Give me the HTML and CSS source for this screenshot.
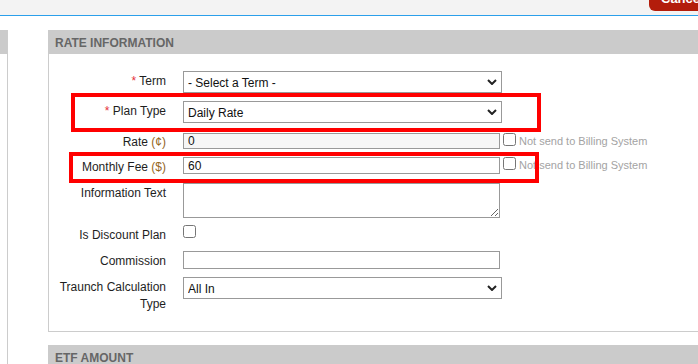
FILE: index.html
```html
<!DOCTYPE html>
<html>
	<head>
		<meta charset="utf-8">
		<title>Rate Plan</title>
		<link rel="stylesheet" href="styles.css">
	</head>
	<body>
		<div class="topbar">
			<button class="btn-cancel" type="button">Cancel</button>
		</div>
		<div class="page">
			<aside class="side">
				<div class="side-head"></div>
			</aside>
			<main class="content">
				<section class="panel">
					<h3 class="panel-head">RATE INFORMATION</h3>
					<div class="panel-body">
						<div class="row row-sel">
							<label class="lbl"><span class="req">*</span> Term</label>
							<div class="ctl">
								<div class="sel">
									<select><option>- Select a Term -</option></select>
									<svg class="chev" width="10" height="6" viewBox="0 0 10 6"><path d="M1 1 L5 5 L9 1" fill="none" stroke="#222" stroke-width="2"/></svg>
								</div>
							</div>
						</div>
						<div class="row row-sel row-mb10">
							<label class="lbl"><span class="req">*</span> Plan Type</label>
							<div class="ctl">
								<div class="sel">
									<select><option>Daily Rate</option></select>
									<svg class="chev" width="10" height="6" viewBox="0 0 10 6"><path d="M1 1 L5 5 L9 1" fill="none" stroke="#222" stroke-width="2"/></svg>
								</div>
							</div>
						</div>
						<div class="row row-mb7">
							<label class="lbl lbl-up">Rate <span class="unit">(¢)</span></label>
							<div class="ctl">
								<input class="txt txt-ro" type="text" value="0" readonly>
								<input class="chk" type="checkbox">
								<span class="note">Not send to Billing System</span>
							</div>
						</div>
						<div class="row row-mb9">
							<label class="lbl">Monthly Fee <span class="unit">($)</span></label>
							<div class="ctl">
								<input class="txt" type="text" value="60">
								<input class="chk" type="checkbox">
								<span class="note">Not send to Billing System</span>
							</div>
						</div>
						<div class="row row-mb7">
							<label class="lbl">Information Text</label>
							<div class="ctl">
								<textarea class="area"></textarea>
							</div>
						</div>
						<div class="row row-mb9">
							<label class="lbl">Is Discount Plan</label>
							<div class="ctl">
								<input class="chk chk-plain" type="checkbox">
							</div>
						</div>
						<div class="row">
							<label class="lbl">Commission</label>
							<div class="ctl">
								<input class="txt txt-tall" type="text">
							</div>
						</div>
						<div class="row row-last">
							<label class="lbl">Traunch Calculation Type</label>
							<div class="ctl">
								<div class="sel">
									<select><option>All In</option></select>
									<svg class="chev" width="10" height="6" viewBox="0 0 10 6"><path d="M1 1 L5 5 L9 1" fill="none" stroke="#222" stroke-width="2"/></svg>
								</div>
							</div>
						</div>
					</div>
				</section>
				<section class="panel panel-etf">
					<h3 class="panel-head">ETF AMOUNT</h3>
				</section>
			</main>
		</div>
		<!-- review marks drawn over the form -->
		<div class="mark mark-plan"></div>
		<div class="mark mark-fee"></div>
	</body>
</html>
```

FILE: styles.css
```css
* {
	margin: 0;
	padding: 0;
	box-sizing: border-box;
}
body {
	font-family: "Liberation Sans", Arial, sans-serif;
	font-size: 12px;
	color: #222;
	background: #fff;
	overflow: hidden;
	height: 364px;
	position: relative;
}
.topbar {
	height: 16px;
	background: #f3f3f3;
	border-bottom: 1px solid #2b9fea;
	display: flex;
	justify-content: flex-end;
	align-items: flex-start;
	overflow: hidden;
}
.btn-cancel {
	margin-top: -13px;
	margin-right: -11px;
	height: 24px;
	line-height: 24px;
	padding: 0 12px;
	width: 60px;
	flex: none;
	border: 0;
	border-radius: 0 0 0 6px;
	background: #b31d0b;
	color: #fff;
	font-family: inherit;
	font-weight: bold;
	font-size: 13px;
	text-align: left;
}
.page {
	display: flex;
	gap: 40px;
	padding-top: 14px;
}
.side {
	width: 8px;
	height: 360px;
	border-right: 1px solid #ccc;
	flex: none;
}
.side-head {
	height: 24px;
	background: #cbcbcb;
}
.content {
	flex: 1;
}
.panel-head {
	height: 24px;
	line-height: 26px;
	padding-left: 7px;
	background: #cbcbcb;
	color: #666;
	font-size: 12px;
	font-weight: bold;
}
.panel-body {
	border-left: 1px solid #ccc;
	border-bottom: 1px solid #ccc;
	padding: 17px 0 20px;
}
.panel-etf {
	margin-top: 13px;
}
.row {
	display: grid;
	grid-template-columns: 117px 1fr;
	column-gap: 17px;
	align-items: start;
	margin-bottom: 8px;
}
.row-mb10 {
	margin-bottom: 10px;
}
.row-mb7 {
	margin-bottom: 7px;
}
.row-mb9 {
	margin-bottom: 9px;
}
.row-last {
	margin-bottom: 0;
}
.lbl {
	text-align: right;
	line-height: 17px;
	margin: 2px 0 -2px;
	color: #1e1e1e;
}
.lbl-up {
	margin: 1px 0 -1px;
}
.req {
	color: #e5303a;
}
.unit {
	color: #94661c;
}
.ctl {
	display: flex;
	align-items: flex-start;
}
.sel {
	position: relative;
	width: 319px;
	height: 22px;
}
.sel select {
	appearance: none;
	-webkit-appearance: none;
	width: 100%;
	height: 22px;
	border: 1px solid #999;
	border-radius: 0;
	background: #fff;
	padding-left: 4px;
	padding-top: 1px;
	font-family: inherit;
	font-size: 12px;
	color: #111;
}
.chev {
	position: absolute;
	right: 5px;
	top: 8px;
	pointer-events: none;
}
.txt {
	width: 317px;
	height: 17px;
	border: 1px solid #999;
	padding: 0 4px;
	font-family: inherit;
	font-size: 12px;
	color: #111;
	background: #fff;
}
.txt-ro {
	height: 16px;
	background: #f6f6f6;
}
.txt-tall {
	height: 18px;
}
.area {
	width: 317px;
	height: 35px;
	border: 1px solid #999;
	font-family: inherit;
	font-size: 12px;
}
.chk {
	width: 13px;
	height: 13px;
	margin: 0 3px;
	flex: none;
}
.chk-plain {
	margin: 0;
}
.note {
	font-size: 11px;
	line-height: 16px;
	color: #a3a3a3;
}
.mark {
	position: absolute;
	border: 4px solid #f00;
	pointer-events: none;
}
.mark-plan {
	left: 71px;
	top: 93px;
	width: 470px;
	height: 39px;
}
.mark-fee {
	left: 69px;
	top: 152px;
	width: 470px;
	height: 31px;
}
```
